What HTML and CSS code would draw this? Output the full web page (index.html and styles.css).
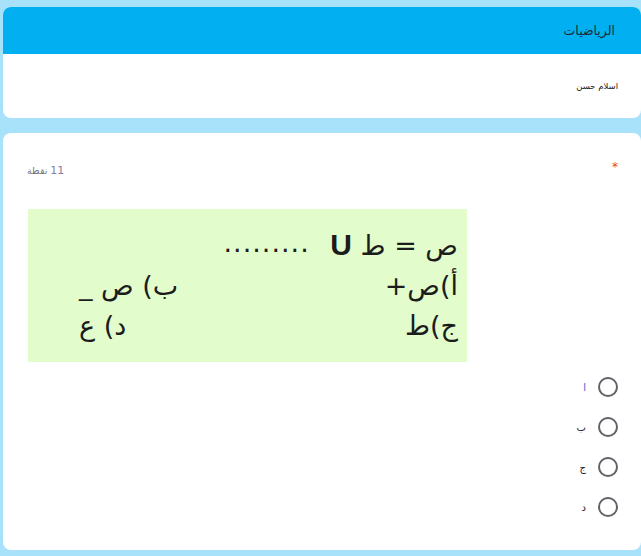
FILE: index.html
```html
<!DOCTYPE html>
<html lang="ar" dir="rtl">
<head>
    <meta charset="UTF-8">
    <meta name="viewport" content="width=device-width, initial-scale=1.0">
    <title>الرياضيات</title>
    <link rel="stylesheet" href="styles.css">
</head>
<body>
    <div class="card head-card">
        <div class="head-bar">
            <h1 class="title">الرياضيات</h1>
        </div>
        <div class="author">اسلام حسن</div>
    </div>

    <div class="card question">
        <div class="q-top">
            <span class="star">*</span>
            <span class="points"><span class="num">11</span> نقطة</span>
        </div>

        <div class="pic">
            <div class="pic-line">ص = ط <b class="u">U</b> <span class="dots">.........</span></div>
            <div class="pic-line pair"><span>أ)ص+</span><span>ب) ص _</span></div>
            <div class="pic-line pair"><span>ج)ط</span><span>د) ع</span></div>
        </div>

        <div class="options">
            <label class="opt"><span class="radio"></span><span class="opt-text blue">ا</span></label>
            <label class="opt"><span class="radio"></span><span class="opt-text">ب</span></label>
            <label class="opt"><span class="radio"></span><span class="opt-text">ج</span></label>
            <label class="opt"><span class="radio"></span><span class="opt-text">د</span></label>
        </div>
    </div>
</body>
</html>
```

FILE: styles.css
```css
body {
    background-color: #a8e2fa;
    font-family: "DejaVu Sans", "Noto Sans", sans-serif;
    margin: 0;
    padding: 7px 0 0 0;
}

.card {
    background-color: #fff;
    border-radius: 8px;
    width: 638px;
    margin-right: 0;
    margin-left: 3px;
    overflow: hidden;
    box-sizing: border-box;
}

.head-card {
    height: 111px;
}

.head-bar {
    background-color: #02b0f1;
    height: 47px;
    display: flex;
    align-items: center;
    padding-right: 26px;
}

.title {
    font-size: 12.5px;
    font-weight: normal;
    color: #1b2a33;
    margin: 0;
}

.author {
    font-size: 8.5px;
    color: #202124;
    padding: 27px 23px 0 0;
}

.question {
    margin-top: 15px;
    height: 417px;
    padding: 27px 23px 0 24px;
}

.q-top {
    display: flex;
    justify-content: space-between;
    height: 49px;
}

.star {
    color: #e0452c;
    font-size: 12px;
}

.points {
    font-size: 9.5px;
    color: #70757a;
    padding-top: 4px;
}

.num {
    color: #8a7aa8;
    font-size: 11px;
}

.pic {
    background-color: #e2fccc;
    width: 439px;
    height: 153px;
    margin-right: auto;
    margin-left: 1px;
    box-sizing: border-box;
    padding: 14px 9px 0 51px;
    font-size: 27px;
    color: #1c1c1c;
    line-height: 40px;
}

.pic-line.pair {
    display: flex;
    justify-content: space-between;
}

.u {
    font-family: "Liberation Sans", sans-serif;
    font-size: 30px;
    line-height: 0;
}

.dots {
    letter-spacing: 1px;
    margin-right: 12px;
    vertical-align: 3px;
}

.options {
    margin-top: 15px;
    display: flex;
    flex-direction: column;
    gap: 20px;
}

.opt {
    display: flex;
    align-items: center;
    gap: 12px;
    height: 20px;
}

.radio {
    width: 16px;
    height: 16px;
    border: 2px solid #5f6368;
    border-radius: 50%;
}

.opt-text {
    font-size: 10px;
    color: #202124;
}

.opt-text.blue {
    color: #3c64c8;
}
```
